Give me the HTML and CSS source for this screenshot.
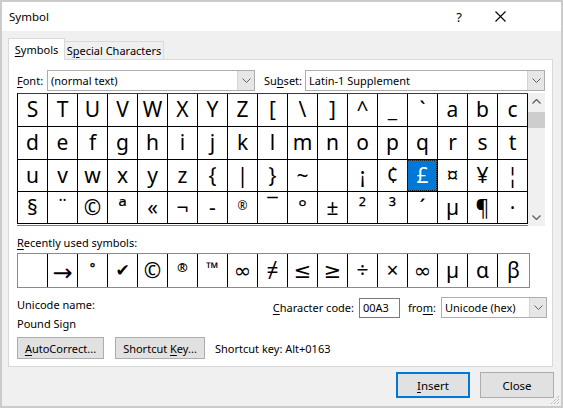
FILE: index.html
```html
<!DOCTYPE html>
<html>
<head>
<meta charset="utf-8">
<link rel="stylesheet" href="styles.css">
</head>
<body>
<div class="window">
  <div class="titlebar">
    <span class="title">Symbol</span>
    <span class="help">?</span>
    <svg class="closex" width="11" height="11" viewBox="0 0 11 11"><path d="M0.5 0.5 L10.5 10.5 M10.5 0.5 L0.5 10.5" stroke="#000" stroke-width="1.1" fill="none"/></svg>
  </div>
  <div class="content">
    <div class="tabs">
      <div class="tab active"><span><u>S</u>ymbols</span></div>
      <div class="tab"><span>S<u>p</u>ecial Characters</span></div>
    </div>
    <div class="panel">
      <div class="selrow">
        <span class="lbl font-lbl"><u>F</u>ont:</span>
        <div class="combo font-combo">
          <span class="val">(normal text)</span>
          <span class="dd"><svg width="9" height="5" viewBox="0 0 9 5"><path d="M0.5 0.5 L4.5 4.5 L8.5 0.5" stroke="#606060" fill="none"/></svg></span>
        </div>
        <span class="lbl subset-lbl">Su<u>b</u>set:</span>
        <div class="combo subset-combo">
          <span class="val">Latin-1 Supplement</span>
          <span class="dd"><svg width="9" height="5" viewBox="0 0 9 5"><path d="M0.5 0.5 L4.5 4.5 L8.5 0.5" stroke="#606060" fill="none"/></svg></span>
        </div>
      </div>
      <div class="charmap">
        <div class="gridwrap">
          <div class="grid">
            <div class="cell">S</div><div class="cell">T</div><div class="cell">U</div><div class="cell">V</div><div class="cell">W</div><div class="cell">X</div><div class="cell">Y</div><div class="cell">Z</div><div class="cell">[</div><div class="cell">\</div><div class="cell">]</div><div class="cell">^</div><div class="cell">_</div><div class="cell">`</div><div class="cell">a</div><div class="cell">b</div><div class="cell">c</div>
            <div class="cell">d</div><div class="cell">e</div><div class="cell">f</div><div class="cell">g</div><div class="cell">h</div><div class="cell">i</div><div class="cell">j</div><div class="cell">k</div><div class="cell">l</div><div class="cell">m</div><div class="cell">n</div><div class="cell">o</div><div class="cell">p</div><div class="cell">q</div><div class="cell">r</div><div class="cell">s</div><div class="cell">t</div>
            <div class="cell">u</div><div class="cell">v</div><div class="cell">w</div><div class="cell">x</div><div class="cell">y</div><div class="cell">z</div><div class="cell">{</div><div class="cell">|</div><div class="cell">}</div><div class="cell">~</div><div class="cell"></div><div class="cell">¡</div><div class="cell">¢</div><div class="cell selected">£</div><div class="cell">¤</div><div class="cell">¥</div><div class="cell">¦</div>
            <div class="cell">§</div><div class="cell">¨</div><div class="cell">©</div><div class="cell ord">ª</div><div class="cell">«</div><div class="cell">¬</div><div class="cell">-</div><div class="cell sup">®</div><div class="cell">¯</div><div class="cell">°</div><div class="cell">±</div><div class="cell">²</div><div class="cell">³</div><div class="cell">´</div><div class="cell">µ</div><div class="cell">¶</div><div class="cell">·</div>
          </div>
        </div>
        <div class="scrollbar">
          <svg class="arrow up" width="9" height="5" viewBox="0 0 9 5"><path d="M0.5 4.5 L4.5 0.5 L8.5 4.5" stroke="#606060" stroke-width="1.3" fill="none"/></svg>
          <div class="thumb"></div>
          <svg class="arrow down" width="9" height="5" viewBox="0 0 9 5"><path d="M0.5 0.5 L4.5 4.5 L8.5 0.5" stroke="#606060" stroke-width="1.3" fill="none"/></svg>
        </div>
      </div>
      <div class="recent-lbl"><u>R</u>ecently used symbols:</div>
      <div class="recent">
        <div class="rcell"></div><div class="rcell arrowc">→</div><div class="rcell small">°</div><div class="rcell check">✔</div><div class="rcell">©</div><div class="rcell small">®</div><div class="rcell tm">™</div><div class="rcell">∞</div><div class="rcell">≠</div><div class="rcell">≤</div><div class="rcell">≥</div><div class="rcell">÷</div><div class="rcell">×</div><div class="rcell">∞</div><div class="rcell">µ</div><div class="rcell">α</div><div class="rcell">β</div>
      </div>
      <div class="info">
        <div class="uname">
          <div class="line">Unicode name:</div>
          <div class="line pound">Pound Sign</div>
        </div>
        <div class="code">
          <span class="lbl"><u>C</u>haracter code:</span>
          <div class="input">00A3</div>
          <span class="lbl from-lbl">fro<u>m</u>:</span>
          <div class="combo from-combo">
            <span class="val">Unicode (hex)</span>
            <span class="dd"><svg width="9" height="5" viewBox="0 0 9 5"><path d="M0.5 0.5 L4.5 4.5 L8.5 0.5" stroke="#606060" fill="none"/></svg></span>
          </div>
        </div>
      </div>
      <div class="btnrow">
        <div class="btn autocorrect"><span><u>A</u>utoCorrect...</span></div>
        <div class="btn shortcut"><span>Shortcut <u>K</u>ey...</span></div>
        <span class="shortcut-text">Shortcut key: Alt+0163</span>
      </div>
    </div>
    <div class="footer">
      <div class="btn big default"><span><u>I</u>nsert</span></div>
      <div class="btn big"><span>Close</span></div>
    </div>
  </div>
  <svg class="grip" width="10" height="10" viewBox="0 0 10 10">
    <path d="M9 1 L1 9 M9 4 L4 9 M9 7 L7 9" stroke="#a0a0a0" stroke-width="1" stroke-dasharray="1 1" fill="none"/>
  </svg>
</div>
</body>
</html>
```
FILE: styles.css
```css
* { box-sizing: border-box; }
html, body { margin: 0; padding: 0; }
body {
  font-family: "Noto Sans", "DejaVu Sans", sans-serif;
  font-size: 11px;
  color: #000;
  background: #f0f0f0;
}
u { text-decoration: underline; text-underline-offset: 2px; }

.window {
  position: relative;
  width: 563px;
  height: 408px;
  border: 2px solid #cbcbcb;
  background: #f0f0f0;
  overflow: hidden;
}

.titlebar {
  height: 29px;
  background: #fff;
  display: flex;
  align-items: center;
  padding-left: 7px;
}
.title { font-size: 11.5px; flex: 1; }
.help { font-size: 13px; margin-right: 33px; }
.closex { margin-right: 55px; }

.content { padding-left: 6px; }

.tabs {
  display: flex;
  align-items: flex-end;
  margin-top: 7px;
  height: 21px;
}
.tab {
  border: 1px solid #d9d9d9;
  border-bottom: none;
  background: #f0f0f0;
  height: 18px;
  width: 100px;
  display: flex;
  align-items: center;
  justify-content: center;
  white-space: nowrap;
}
.tab.active {
  width: 57px;
  height: 22px;
  background: #fff;
  margin-bottom: -1px;
  position: relative;
  z-index: 1;
  margin-right: -1px;
}

.panel {
  width: 545px;
  height: 308px;
  background: #fff;
  border: 1px solid #d9d9d9;
  padding-left: 8px;
}

.selrow {
  margin-top: 10px;
  display: flex;
  align-items: center;
  height: 21px;
}
.lbl { white-space: nowrap; }
.font-lbl { width: 30px; }
.subset-lbl { width: 41px; margin-left: 9px; }

.combo {
  height: 21px;
  border: 1px solid #adadad;
  background: #fff;
  display: flex;
  align-items: center;
}
.combo .val { flex: 1; padding-left: 3px; white-space: nowrap; }
.combo .dd {
  width: 17px;
  height: 19px;
  background: #e6e6e6;
  border-left: 1px solid #d4d4d4;
  display: flex;
  align-items: center;
  justify-content: center;
}
.font-combo { width: 208px; }
.subset-combo { width: 240px; }

.charmap {
  margin-top: 2px;
  display: flex;
  align-items: flex-start;
}
.gridwrap {
  border-bottom: 1px solid #7d7d7d;
  padding-bottom: 1px;
}
.grid {
  display: grid;
  grid-template-columns: repeat(17, 30px);
  grid-template-rows: 33px 33px 32px 32px;
  border-top: 1px solid #3c3c3c;
  border-left: 1px solid #000;
}
.cell {
  border-right: 1px solid #000;
  border-bottom: 1px solid #000;
  display: flex;
  align-items: center;
  justify-content: center;
  font-family: "Noto Sans", "DejaVu Sans", sans-serif;
  font-size: 21px;
  line-height: 1;
  padding-bottom: 1px;
}
.cell.sup { font-size: 12px; align-items: flex-start; padding-top: 8px; }
.cell.ord { font-size: 24px; }
.cell.selected {
  background: #0078d7;
  color: #fff;
  position: relative;
}
.cell.selected::after {
  content: "";
  position: absolute;
  inset: 0 0 0 -1px;
  border: 1px dotted #222;
}

.scrollbar {
  width: 17px;
  height: 133px;
  background: #f0f0f0;
  display: flex;
  flex-direction: column;
  align-items: center;
}
.arrow.up { margin-top: 6px; }
.thumb {
  width: 17px;
  height: 16px;
  background: #cdcdcd;
  margin-top: 8px;
}
.arrow.down { margin-top: auto; margin-bottom: 6px; }

.recent-lbl {
  margin-top: 9px;
  line-height: 16px;
  height: 16px;
}
.recent {
  margin-top: 2px;
  width: 513px;
  height: 35px;
  border: 1px solid #8a8a8a;
  display: grid;
  grid-template-columns: repeat(16, 30px) 31px;
}
.rcell {
  border-right: 1px solid #000;
  display: flex;
  align-items: center;
  justify-content: center;
  font-family: "Noto Sans", "DejaVu Sans", sans-serif;
  font-size: 21px;
  line-height: 1;
}
.rcell:last-child { border-right: none; }
.rcell.small { font-size: 13px; align-items: flex-start; padding-top: 7px; font-weight: bold; }
.rcell.tm { font-size: 16px; align-items: flex-start; padding-top: 6px; font-weight: bold; }
.rcell.check { font-family: "DejaVu Sans", sans-serif; font-size: 17px; }
.rcell.arrowc { font-family: "DejaVu Sans", sans-serif; font-size: 24px; padding-top: 5px; }

.info {
  display: flex;
  align-items: flex-start;
}
.uname { margin-top: 9px; }
.line { line-height: 16px; }
.line.pound { margin-top: 3px; }
.code {
  margin-left: auto;
  margin-right: 5px;
  margin-top: 9px;
  display: flex;
  align-items: center;
}
.input {
  width: 41px;
  height: 20px;
  border: 1px solid #7a7a7a;
  margin-left: 5px;
  padding-left: 3px;
  display: flex;
  align-items: center;
}
.from-lbl { margin-left: 8px; }
.from-combo { width: 106px; margin-left: 5px; }

.btnrow {
  margin-top: 5px;
  display: flex;
  align-items: center;
}
.btn {
  height: 22px;
  background: #e1e1e1;
  border: 1px solid #adadad;
  display: flex;
  align-items: center;
  justify-content: center;
  white-space: nowrap;
}
.autocorrect { width: 87px; }
.shortcut { width: 90px; margin-left: 11px; }
.shortcut-text { margin-left: 10px; }

.footer {
  display: flex;
  justify-content: flex-end;
  margin-top: 5px;
  margin-right: 7px;
}
.btn.big { width: 74px; height: 26px; margin-left: 10px; font-size: 11.5px; }
.btn.default { border: 2px solid #0078d7; }

.grip {
  position: absolute;
  right: 1px;
  bottom: 1px;
}
```
